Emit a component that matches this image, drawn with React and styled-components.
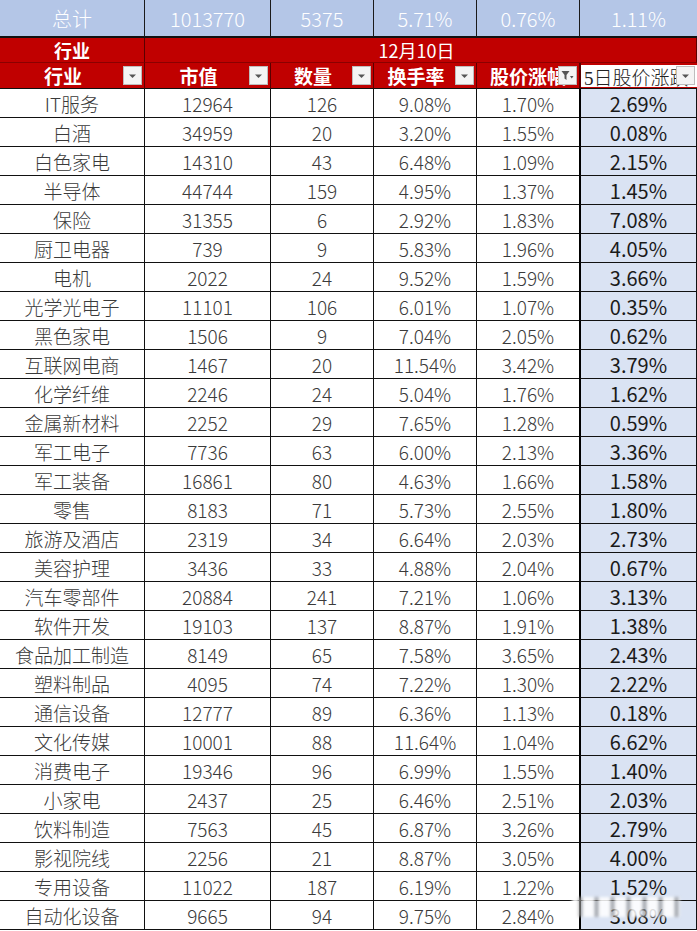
import React from 'react';
import styled, { createGlobalStyle } from 'styled-components';

const GlobalStyle = createGlobalStyle`
    html, body {
        margin: 0;
        padding: 0;
        background: #ffffff;
    }
    body {
        font-family: "Noto Sans CJK SC", "Noto Sans", sans-serif;
    }
`;

const rows = [
    ['IT服务', '12964', '126', '9.08%', '1.70%', '2.69%'],
    ['白酒', '34959', '20', '3.20%', '1.55%', '0.08%'],
    ['白色家电', '14310', '43', '6.48%', '1.09%', '2.15%'],
    ['半导体', '44744', '159', '4.95%', '1.37%', '1.45%'],
    ['保险', '31355', '6', '2.92%', '1.83%', '7.08%'],
    ['厨卫电器', '739', '9', '5.83%', '1.96%', '4.05%'],
    ['电机', '2022', '24', '9.52%', '1.59%', '3.66%'],
    ['光学光电子', '11101', '106', '6.01%', '1.07%', '0.35%'],
    ['黑色家电', '1506', '9', '7.04%', '2.05%', '0.62%'],
    ['互联网电商', '1467', '20', '11.54%', '3.42%', '3.79%'],
    ['化学纤维', '2246', '24', '5.04%', '1.76%', '1.62%'],
    ['金属新材料', '2252', '29', '7.65%', '1.28%', '0.59%'],
    ['军工电子', '7736', '63', '6.00%', '2.13%', '3.36%'],
    ['军工装备', '16861', '80', '4.63%', '1.66%', '1.58%'],
    ['零售', '8183', '71', '5.73%', '2.55%', '1.80%'],
    ['旅游及酒店', '2319', '34', '6.64%', '2.03%', '2.73%'],
    ['美容护理', '3436', '33', '4.88%', '2.04%', '0.67%'],
    ['汽车零部件', '20884', '241', '7.21%', '1.06%', '3.13%'],
    ['软件开发', '19103', '137', '8.87%', '1.91%', '1.38%'],
    ['食品加工制造', '8149', '65', '7.58%', '3.65%', '2.43%'],
    ['塑料制品', '4095', '74', '7.22%', '1.30%', '2.22%'],
    ['通信设备', '12777', '89', '6.36%', '1.13%', '0.18%'],
    ['文化传媒', '10001', '88', '11.64%', '1.04%', '6.62%'],
    ['消费电子', '19346', '96', '6.99%', '1.55%', '1.40%'],
    ['小家电', '2437', '25', '6.46%', '2.51%', '2.03%'],
    ['饮料制造', '7563', '45', '6.87%', '3.26%', '2.79%'],
    ['影视院线', '2256', '21', '8.87%', '3.05%', '4.00%'],
    ['专用设备', '11022', '187', '6.19%', '1.22%', '1.52%'],
    ['自动化设备', '9665', '94', '9.75%', '2.84%', '3.08%'],
];

const totals = ['总计', '1013770', '5375', '5.71%', '0.76%', '1.11%'];

const Sheet = styled.div`
    position: relative;
    width: 697px;
    display: grid;
    grid-template-columns: 145px 126px 103px 103px 103px 117px;
    grid-template-rows: 38px 25px 26px;
    grid-auto-rows: 29px;
    overflow: hidden;
`;

const TotalCell = styled.div`
    box-sizing: border-box;
    background: #b4c6e7;
    color: #ffffff;
    font-size: 20px;
    font-weight: 300;
    display: flex;
    align-items: center;
    justify-content: center;
    border-right: 1px solid #1a1a1a;
    border-bottom: 2px solid #111;
    &:nth-child(6) {
        border-right: none;
    }
`;

const BandCell = styled.div`
    box-sizing: border-box;
    background: #c00000;
    color: #ffffff;
    font-size: 18px;
    font-weight: ${(p) => (p.$bold ? 700 : 400)};
    display: flex;
    align-items: center;
    justify-content: center;
    grid-column: ${(p) => p.$span || 'auto'};
    border-right: 1px solid #5a0000;
    border-bottom: 1px solid #8a0000;
    padding-right: ${(p) => (p.$shift ? '8px' : '0')};
`;

const HeadCell = styled.div`
    position: relative;
    box-sizing: border-box;
    background: #c00000;
    color: #ffffff;
    font-size: 19px;
    font-weight: 700;
    display: flex;
    align-items: center;
    justify-content: center;
    white-space: nowrap;
    overflow: hidden;
    border-right: 1px solid #5a0000;
    border-bottom: 1px solid #111;
    padding-right: ${(p) => (p.$pad ? '18px' : '0')};
`;

const PlainHead = styled.div`
    position: relative;
    box-sizing: border-box;
    background: #c00000;
    padding: 2px 0 1px 0;
    border-left: 1px solid #5a0000;
    border-bottom: 1px solid #111;
`;

const PlainHeadInner = styled.div`
    height: 100%;
    background: #ffffff;
    color: #222;
    font-family: "Liberation Serif", "Noto Sans CJK SC", serif;
    font-size: 19px;
    font-weight: 300;
    display: flex;
    align-items: center;
    padding-left: 3px;
    white-space: nowrap;
    overflow: hidden;
`;

const FilterBtn = styled.div`
    position: absolute;
    right: 2px;
    top: 3px;
    width: 19px;
    height: 19px;
    box-sizing: border-box;
    background: #f4f4f4;
    border: 1px solid #bdbdbd;
    display: flex;
    align-items: center;
    justify-content: center;
`;

const Cell = styled.div`
    box-sizing: border-box;
    display: flex;
    align-items: center;
    justify-content: center;
    font-size: ${(p) => (p.$accent ? '20px' : '19px')};
    font-weight: ${(p) => (p.$accent ? 400 : 300)};
    color: ${(p) => (p.$accent ? '#1a1a1a' : '#3a3a3a')};
    background: ${(p) => (p.$accent ? '#dae3f3' : '#ffffff')};
    border-right: 1px solid #111;
    border-bottom: 1px solid #111;
    border-left: ${(p) => (p.$accent ? '2px solid #000' : 'none')};
    margin-left: ${(p) => (p.$accent ? '-1px' : '0')};
    white-space: nowrap;
`;

const Watermark = styled.div`
    position: absolute;
    left: 572px;
    top: 897px;
    width: 108px;
    height: 20px;
    background: repeating-linear-gradient(
        90deg,
        rgba(255, 255, 255, 0.85) 0px,
        rgba(255, 255, 255, 0.85) 6px,
        rgba(120, 120, 120, 0.55) 7px,
        rgba(120, 120, 120, 0.55) 10px,
        rgba(255, 255, 255, 0.85) 11px,
        rgba(255, 255, 255, 0.85) 16px
    );
    filter: blur(1.5px);
`;

const Arrow = () => (
    <svg width="9" height="6" viewBox="0 0 9 6">
        <path d="M1 1.5 L8 1.5 L4.5 5 Z" fill="#555" />
    </svg>
);

const Funnel = () => (
    <svg width="13" height="12" viewBox="0 0 13 12">
        <path d="M0.5 1 L8.5 1 L5.5 5 L5.5 10 L3.5 8.5 L3.5 5 Z" fill="#555" />
        <path d="M9 6 L12.5 6 L10.75 8.5 Z" fill="#555" />
    </svg>
);

const headers = ['行业', '市值', '数量', '换手率', '股价涨幅'];

const App = () => {
    return (
        <>
            <GlobalStyle />
            <Sheet>
                {totals.map((t, i) => (
                    <TotalCell key={'t' + i}>{t}</TotalCell>
                ))}

                <BandCell $bold>行业</BandCell>
                <BandCell $span="2 / span 5" $shift>12月10日</BandCell>

                {headers.map((h, i) => (
                    <HeadCell key={'h' + i} $pad={i !== 4}>
                        {h}
                        <FilterBtn>{i === 4 ? <Funnel /> : <Arrow />}</FilterBtn>
                    </HeadCell>
                ))}
                <PlainHead>
                    <PlainHeadInner>5日股价涨跌</PlainHeadInner>
                    <FilterBtn>
                        <Arrow />
                    </FilterBtn>
                </PlainHead>

                {rows.map((r) =>
                    r.map((v, j) => (
                        <Cell key={r[0] + j} $accent={j === 5}>
                            {v}
                        </Cell>
                    ))
                )}
                <Watermark />
            </Sheet>
        </>
    );
};

export default App;
